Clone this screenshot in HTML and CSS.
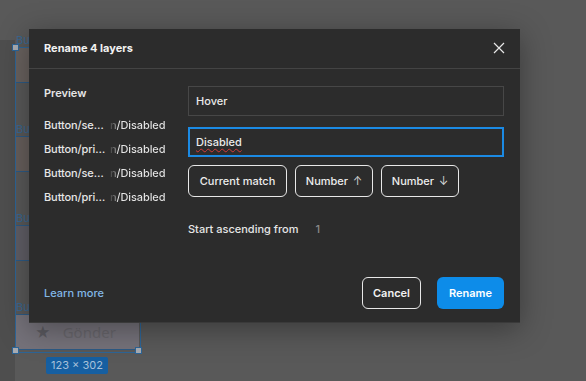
FILE: index.html
```html
<!DOCTYPE html>
<html>
<head>
<meta charset="utf-8">
<link rel="stylesheet" href="styles.css">
</head>
<body>
<div class="canvas">
  <div class="strip"></div>
  <div class="selection">
    <div class="item"><div class="lbl">Bu</div><div class="box b1"></div></div>
    <div class="item"><div class="lbl">Bu</div><div class="box b2"></div></div>
    <div class="item"><div class="lbl">Bu</div><div class="box b3"></div></div>
    <div class="item"><div class="lbl">Bu</div><div class="box b4"><span class="star">★</span><span class="gonder">Gönder</span></div></div>
    <span class="handle h-tl"></span>
    <span class="handle h-bl"></span>
    <span class="handle h-br"></span>
    <div class="size-pill">123 × 302</div>
  </div>
</div>

<div class="dialog">
  <div class="dlg-header">
    <span class="dlg-title">Rename 4 layers</span>
    <svg class="close" width="12" height="12" viewBox="0 0 12 12"><path d="M1 1L11 11M11 1L1 11" stroke="#e8e8e8" stroke-width="1.2" fill="none"/></svg>
  </div>
  <div class="dlg-body">
    <div class="preview">
      <div class="preview-title">Preview</div>
      <div class="prow"><span class="head">Button/se…</span><span class="tail">n/Disabled</span></div>
      <div class="prow"><span class="head">Button/pri…</span><span class="tail">n/Disabled</span></div>
      <div class="prow"><span class="head">Button/se…</span><span class="tail">n/Disabled</span></div>
      <div class="prow"><span class="head">Button/pri…</span><span class="tail">n/Disabled</span></div>
    </div>
    <div class="form">
      <div class="field">Hover</div>
      <div class="field focused"><span class="spell">Disabled</span></div>
      <div class="chips">
        <button class="chip c1">Current match</button>
        <button class="chip c2">Number <span class="arrow">↑</span></button>
        <button class="chip c2">Number <span class="arrow">↓</span></button>
      </div>
      <div class="start"><span>Start ascending from</span><span class="num">1</span></div>
    </div>
  </div>
  <div class="dlg-footer">
    <span class="learn">Learn more</span>
    <div class="actions">
      <button class="btn cancel">Cancel</button>
      <button class="btn primary">Rename</button>
    </div>
  </div>
</div>
</body>
</html>
```
FILE: styles.css
```css
* { box-sizing: border-box; }
html, body { margin: 0; padding: 0; }
body {
  width: 586px;
  height: 381px;
  background: #595959;
  font-family: Inter, "Noto Sans", sans-serif;
  font-size: 11px;
  overflow: hidden;
  position: relative;
}
.canvas { position: absolute; inset: 0; }
.strip {
  position: absolute;
  left: 0; top: 40px; width: 15px; height: 341px;
  background: #4e4e4e;
}
.selection {
  position: absolute;
  left: 15px; top: 33px;
  width: 124px;
  display: flex;
  flex-direction: column;
  gap: 39px;
}
.selection::before {
  content: "";
  position: absolute;
  left: 0; top: 14px; width: 124px; height: 304px;
  border: 1px solid #2d6597;
}
.item { display: flex; flex-direction: column; }
.lbl {
  height: 14px; line-height: 14px;
  color: #3a6791;
  padding-left: 1px;
}
.box {
  height: 36px;
  border-top: 1px solid #2d5a84;
  border-bottom: 1px solid #2d5a84;
  display: flex; align-items: center;
  padding-left: 20px;
  gap: 12px;
}
.b1 { background: #69625f; }
.b2 { background: #675f5c; }
.b3 { background: #605e66; }
.b4 { background: #75727a; }
.star { color: #5b5a60; font-size: 15px; }
.gonder { color: #68666c; font-size: 15px; font-family: "Noto Sans", sans-serif; }
.handle {
  position: absolute;
  width: 7px; height: 7px;
  background: #a8acb2;
  border: 1px solid #2d6597;
}
.h-tl { left: -3px; top: 11px; }
.h-bl { left: -3px; top: 314px; }
.h-br { left: 120px; top: 314px; }
.size-pill {
  position: absolute;
  left: 31px; top: 324px;
  height: 17px; line-height: 17px;
  padding: 0 5px;
  background: #165fa1;
  color: #a7c1da;
  border-radius: 2px;
  font-size: 11px;
}

.dialog {
  position: absolute;
  left: 29px; top: 29px;
  width: 491px; height: 294px;
  background: #2c2c2c;
  border-bottom: 1px solid #3a3a3a;
  box-shadow: 0 6px 28px rgba(0,0,0,0.35);
  display: flex;
  flex-direction: column;
  color: #e6e6e6;
}
.dlg-header {
  height: 40px;
  border-bottom: 1px solid #444;
  display: flex; align-items: center; justify-content: space-between;
  padding: 0 15px 1px 15px;
}
.dlg-title { font-weight: 700; color: #f2f2f2; }
.dlg-body {
  display: grid;
  grid-template-columns: 144px 316px;
  padding: 0 16px 0 15px;
}
.preview { padding-top: 12px; }
.preview-title { height: 24px; line-height: 24px; font-weight: 600; margin-bottom: 8px; }
.prow { height: 24px; line-height: 24px; display: flex; white-space: nowrap; font-weight: 500; letter-spacing: -0.1px; }
.head { width: 66px; }
.tail {
  background: linear-gradient(to right, rgba(230,230,230,0.12) 0px, rgba(230,230,230,0.4) 5px, #e6e6e6 7px);
  -webkit-background-clip: text;
  background-clip: text;
  color: transparent;
}
.form { padding-top: 17px; display: flex; flex-direction: column; }
.field {
  height: 30px;
  border: 1px solid #474747;
  padding: 0 7px;
  display: flex; align-items: center;
  color: #eaeaea;
  font-weight: 500;
}
.field.focused { margin-top: 11px; border: 2px solid #1b8ae4; padding: 0 6px; }
.spell {
  text-decoration: underline wavy #d43a3a;
  text-decoration-thickness: 1px;
  text-underline-offset: 2px;
}
.chips { display: flex; gap: 8px; margin-top: 8px; }
.chip {
  height: 32px;
  padding: 0;
  white-space: nowrap;
  background: transparent;
  border: 1px solid #e8e8e8;
  border-radius: 6px;
  color: #ededed;
  font: 500 11px Inter, "Noto Sans", sans-serif;
}
.arrow { font-weight: 300; margin-left: 2px; }
.c1 { width: 99px; }
.c2 { width: 78px; }
.start { margin-top: 25px; display: flex; gap: 17px; height: 14px; line-height: 14px; font-weight: 500; }
.num { color: #8a8a8a; }
.dlg-footer {
  margin-top: auto;
  display: flex; align-items: center; justify-content: space-between;
  padding: 0 16px 13px 15px;
}
.learn { color: #82b7e6; font-weight: 500; }
.actions { display: flex; gap: 16px; }
.btn {
  height: 32px;
  border-radius: 6px;
  font: 600 11px Inter, "Noto Sans", sans-serif;
  color: #f2f2f2;
}
.cancel { width: 59px; background: transparent; border: 1px solid #e8e8e8; }
.primary { width: 67px; background: #0d8ce9; border: none; color: #fff; }
```
